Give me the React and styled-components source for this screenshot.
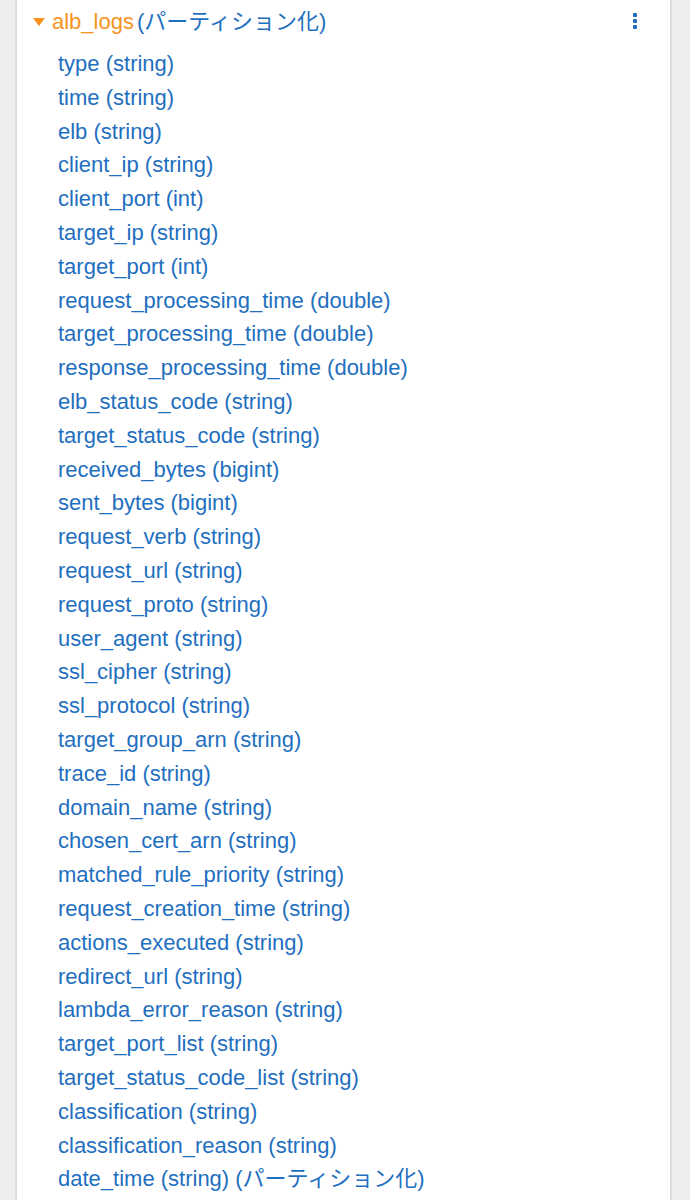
import React from "react";
import styled, { createGlobalStyle } from "styled-components";

const Global = createGlobalStyle`
  html, body { margin: 0; padding: 0; background: #eeeeee; }
  body { font-family: "Liberation Sans", Arial, "Noto Sans CJK JP", sans-serif; }
`;

const Page = styled.div`
  display: flex;
  padding: 0 18px 0 15px;
  min-height: 1200px;
  box-sizing: border-box;
`;

const Panel = styled.div`
  flex: 1;
  background: #ffffff;
  border-left: 2px solid #dcdcdc;
  border-right: 2px solid #dcdcdc;
  padding: 5px 0 0 0;
`;

const Header = styled.div`
  display: flex;
  align-items: center;
  height: 34px;
  padding: 0 33px 0 16px;
`;

const Caret = styled.span`
  width: 0;
  height: 0;
  border-left: 6px solid transparent;
  border-right: 6px solid transparent;
  border-top: 8px solid #f7931e;
  margin-right: 7px;
  margin-top: 0;
`;

const Title = styled.div`
  font-size: 22px;
  line-height: 34px;
  white-space: nowrap;
`;

const TableName = styled.span`
  color: #f7931e;
  margin-right: 3px;
`;

const Blue = styled.span`
  color: #1f6fbf;
`;

const Menu = styled.div`
  margin-left: auto;
  margin-top: -2px;
  display: flex;
  flex-direction: column;
  gap: 2px;
`;

const Dot = styled.span`
  width: 4px;
  height: 4px;
  border-radius: 1px;
  background: #1f6fbf;
`;

const List = styled.ul`
  list-style: none;
  margin: 8px 0 0 0;
  padding: 0 0 0 41px;
`;

const Item = styled.li`
  height: 33.8px;
  line-height: 33.8px;
  font-size: 22px;
  color: #1f6fbf;
  white-space: nowrap;
`;

const cols = [
  ["type", "string"], ["time", "string"], ["elb", "string"], ["client_ip", "string"],
  ["client_port", "int"], ["target_ip", "string"], ["target_port", "int"],
  ["request_processing_time", "double"], ["target_processing_time", "double"],
  ["response_processing_time", "double"], ["elb_status_code", "string"],
  ["target_status_code", "string"], ["received_bytes", "bigint"], ["sent_bytes", "bigint"],
  ["request_verb", "string"], ["request_url", "string"], ["request_proto", "string"],
  ["user_agent", "string"], ["ssl_cipher", "string"], ["ssl_protocol", "string"],
  ["target_group_arn", "string"], ["trace_id", "string"], ["domain_name", "string"],
  ["chosen_cert_arn", "string"], ["matched_rule_priority", "string"],
  ["request_creation_time", "string"], ["actions_executed", "string"],
  ["redirect_url", "string"], ["lambda_error_reason", "string"],
  ["target_port_list", "string"], ["target_status_code_list", "string"],
  ["classification", "string"], ["classification_reason", "string"],
];

export default function App() {
  return (
    <>
      <Global />
      <Page>
        <Panel>
          <Header>
            <Caret />
            <Title>
              <TableName>alb_logs</TableName>
              <Blue>(パーティション化)</Blue>
            </Title>
            <Menu>
              <Dot />
              <Dot />
              <Dot />
            </Menu>
          </Header>
          <List>
            {cols.map(([n, t]) => (
              <Item key={n}>{n} ({t})</Item>
            ))}
            <Item>date_time (string) (パーティション化)</Item>
          </List>
        </Panel>
      </Page>
    </>
  );
}
